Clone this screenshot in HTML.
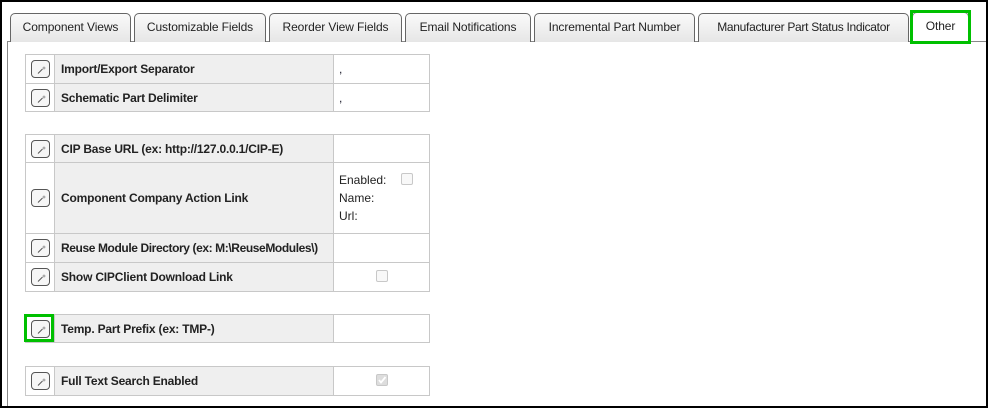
<!DOCTYPE html>
<html><head><style>
*{box-sizing:border-box;margin:0;padding:0}
html,body{width:988px;height:408px;overflow:hidden}
body{background:#fff;font-family:"Liberation Sans","DejaVu Sans",sans-serif;font-size:12px;color:#1a1a2a;position:relative}
.frame{position:absolute;left:0;top:0;width:988px;height:408px;border:2px solid #000}
.panel{position:absolute;left:7px;top:41px;width:980px;height:366px;border-left:1px solid #888;border-top:1px solid #888}
.tab{position:absolute;top:13px;height:29px;border:1px solid #666;border-bottom:none;border-radius:5px 5px 0 0;background:linear-gradient(#fafafa,#e6e6e6);text-align:center;line-height:26px;color:#222;white-space:nowrap;letter-spacing:-0.1px}
.tab.sel{background:#fff;top:12px;height:31px;border-color:#888}
.green{position:absolute;border:3px solid #00c000}
table{position:absolute;left:25px;width:405px;border-collapse:collapse}
td{border:1px solid #c8c8c8;padding:0;white-space:nowrap}
td.i{width:29px;text-align:center;background:#fff}
td.l{width:279px;background:#efefef;padding-left:6px;font-weight:bold;color:#222;letter-spacing:-0.2px}
td.v{background:#fff;padding-left:5px}
.btn{display:inline-block;width:19px;height:18px;border:1px solid #555;border-radius:4px;background:#f6f6f6;vertical-align:middle;position:relative}
.btn svg{position:absolute;left:3px;top:3px}
.cb{display:inline-block;width:12px;height:12px;border:1px solid #c8c8c8;border-radius:2px;background:#f8f8f8}
</style></head><body>
<div class="panel"></div>
<div class="tab" style="left:10px;width:121px">Component Views</div>
<div class="tab" style="left:134px;width:132px">Customizable Fields</div>
<div class="tab" style="left:269px;width:133px">Reorder View Fields</div>
<div class="tab" style="left:405px;width:126px">Email Notifications</div>
<div class="tab" style="left:534px;width:161px">Incremental Part Number</div>
<div class="tab" style="left:698px;width:211px;letter-spacing:-0.3px">Manufacturer Part Status Indicator</div>
<div class="tab sel" style="left:912px;width:57px">Other</div>
<div class="green" style="left:910px;top:10px;width:61px;height:34px"></div>

<table style="top:54px">
<tr style="height:29px"><td class="i"><span class="btn"><svg width="12" height="12"><path d="M3 9.5 L7.5 5" stroke="#555" stroke-width="1"/><path d="M9 2.5v3M7.5 4h3" stroke="#777" stroke-width="0.7"/></svg></span></td><td class="l">Import/Export Separator</td><td class="v">,</td></tr>
<tr style="height:28px"><td class="i"><span class="btn"><svg width="12" height="12"><path d="M3 9.5 L7.5 5" stroke="#555" stroke-width="1"/><path d="M9 2.5v3M7.5 4h3" stroke="#777" stroke-width="0.7"/></svg></span></td><td class="l">Schematic Part Delimiter</td><td class="v">,</td></tr>
</table>

<table style="top:134px">
<tr style="height:28px"><td class="i"><span class="btn"><svg width="12" height="12"><path d="M3 9.5 L7.5 5" stroke="#555" stroke-width="1"/><path d="M9 2.5v3M7.5 4h3" stroke="#777" stroke-width="0.7"/></svg></span></td><td class="l">CIP Base URL (ex: http://127.0.0.1/CIP-E)</td><td class="v"></td></tr>
<tr style="height:71px"><td class="i"><span class="btn"><svg width="12" height="12"><path d="M3 9.5 L7.5 5" stroke="#555" stroke-width="1"/><path d="M9 2.5v3M7.5 4h3" stroke="#777" stroke-width="0.7"/></svg></span></td><td class="l">Component Company Action Link</td><td class="v" style="line-height:18px;color:#222">Enabled:<span class="cb" style="margin-left:15px;vertical-align:-1px"></span><br>Name:<br>Url:</td></tr>
<tr style="height:29px"><td class="i"><span class="btn"><svg width="12" height="12"><path d="M3 9.5 L7.5 5" stroke="#555" stroke-width="1"/><path d="M9 2.5v3M7.5 4h3" stroke="#777" stroke-width="0.7"/></svg></span></td><td class="l" style="letter-spacing:-0.4px">Reuse Module Directory (ex: M:\ReuseModules\)</td><td class="v"></td></tr>
<tr style="height:29px"><td class="i"><span class="btn"><svg width="12" height="12"><path d="M3 9.5 L7.5 5" stroke="#555" stroke-width="1"/><path d="M9 2.5v3M7.5 4h3" stroke="#777" stroke-width="0.7"/></svg></span></td><td class="l">Show CIPClient Download Link</td><td class="v" style="text-align:center;padding:0"><span class="cb"></span></td></tr>
</table>

<table style="top:314px">
<tr style="height:28px"><td class="i"><span class="btn"><svg width="12" height="12"><path d="M3 9.5 L7.5 5" stroke="#555" stroke-width="1"/><path d="M9 2.5v3M7.5 4h3" stroke="#777" stroke-width="0.7"/></svg></span></td><td class="l">Temp. Part Prefix (ex: TMP-)</td><td class="v"></td></tr>
</table>
<div class="green" style="left:24px;top:314px;width:30px;height:28px"></div>

<table style="top:366px">
<tr style="height:29px"><td class="i"><span class="btn"><svg width="12" height="12"><path d="M3 9.5 L7.5 5" stroke="#555" stroke-width="1"/><path d="M9 2.5v3M7.5 4h3" stroke="#777" stroke-width="0.7"/></svg></span></td><td class="l">Full Text Search Enabled</td><td class="v" style="text-align:center;padding:0"><span class="cb" style="background:#ddd;position:relative"><svg width="10" height="10" style="position:absolute;left:0;top:0"><path d="M2 5 L4 7.5 L8.5 2" stroke="#fff" stroke-width="1.8" fill="none"/></svg></span></td></tr>
</table>
<div class="frame"></div>
</body></html>
